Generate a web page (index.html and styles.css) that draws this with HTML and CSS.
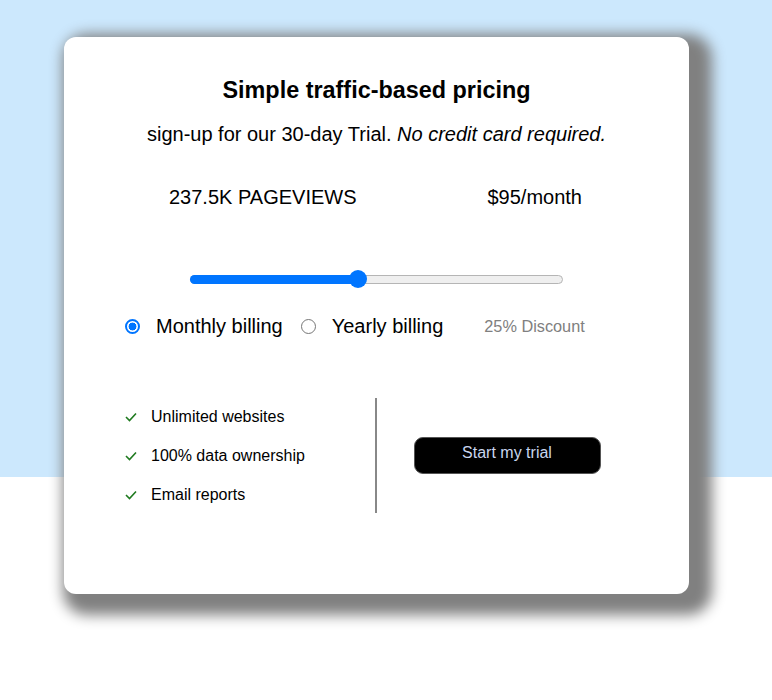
FILE: index.html
```html
<!DOCTYPE html>
<html>
<head>
<meta charset="utf-8">
<link rel="stylesheet" href="styles.css">
</head>
<body>
<div class="page">
  <div class="card">
    <h1 class="title">Simple traffic-based pricing</h1>
    <p class="subtitle">sign-up for our 30-day Trial. <em>No credit card required.</em></p>
    <div class="stats">
      <span class="views">237.5K PAGEVIEWS</span>
      <span class="price">$95/month</span>
    </div>
    <div class="slider">
      <div class="track">
        <div class="fill" style="width: 45%"></div>
        <div class="thumb" style="left: 45%"></div>
      </div>
    </div>
    <div class="billing">
      <span class="radio checked"></span>
      <span class="label">Monthly billing</span>
      <span class="radio"></span>
      <span class="label">Yearly billing</span>
      <span class="discount">25% Discount</span>
    </div>
    <div class="bottom">
      <ul class="features">
        <li><svg class="check" viewBox="0 0 12 10" width="12" height="10"><polyline points="1,5 4.5,8.5 11,1.5" fill="none" stroke="#1f7a1f" stroke-width="1.6"/></svg>Unlimited websites</li>
        <li><svg class="check" viewBox="0 0 12 10" width="12" height="10"><polyline points="1,5 4.5,8.5 11,1.5" fill="none" stroke="#1f7a1f" stroke-width="1.6"/></svg>100% data ownership</li>
        <li><svg class="check" viewBox="0 0 12 10" width="12" height="10"><polyline points="1,5 4.5,8.5 11,1.5" fill="none" stroke="#1f7a1f" stroke-width="1.6"/></svg>Email reports</li>
      </ul>
      <div class="divider"></div>
      <div class="cta">
        <button class="trial">Start my trial</button>
      </div>
    </div>
  </div>
</div>
</body>
</html>
```
FILE: styles.css
```css
html, body {
  margin: 0;
  padding: 0;
}
body {
  width: 772px;
  height: 700px;
  background: linear-gradient(#cce8fd 0, #cce8fd 477px, #ffffff 477px);
  font-family: "Liberation Sans", Arial, sans-serif;
  color: #000;
  overflow: hidden;
}
.page {
  padding: 37px 0 0 64px;
}
.card {
  width: 625px;
  height: 557px;
  box-sizing: border-box;
  background: #fff;
  border-radius: 12px;
  box-shadow: 11px 9px 14px 12px #808080;
  padding-top: 40px;
}
.title {
  margin: 0;
  font-size: 23.4px;
  line-height: 26px;
  font-weight: bold;
  text-align: center;
}
.subtitle {
  margin: 19px 0 0;
  font-size: 20px;
  line-height: 24px;
  text-align: center;
}
.stats {
  margin-top: 39px;
  display: flex;
  justify-content: space-between;
  padding: 0 107px 0 105px;
  font-size: 20px;
  line-height: 24px;
}
.slider {
  margin-top: 61px;
  height: 18px;
  display: flex;
  align-items: center;
  padding-left: 126px;
}
.track {
  position: relative;
  width: 373px;
  height: 9px;
  box-sizing: border-box;
  border: 1px solid #b5b5b5;
  border-radius: 5px;
  background: #efefef;
}
.fill {
  position: absolute;
  left: -1px;
  top: -1px;
  height: 9px;
  border-radius: 5px 0 0 5px;
  background: #0075ff;
}
.thumb {
  position: absolute;
  top: -5.5px;
  width: 18px;
  height: 18px;
  margin-left: -9px;
  border-radius: 50%;
  background: #0075ff;
}
.billing {
  margin-top: 26px;
  display: flex;
  align-items: center;
  padding-left: 61px;
  font-size: 20px;
  line-height: 24px;
}
.radio {
  width: 15px;
  height: 15px;
  box-sizing: border-box;
  border: 1px solid #767676;
  border-radius: 50%;
  background: #fff;
  margin-right: 16px;
}
.radio.checked {
  border: 2px solid #0075ff;
  background: radial-gradient(circle, #0075ff 0, #0075ff 3.7px, #fff 4.2px);
}
.label {
  margin-right: 18px;
}
.label + .radio + .label {
  margin-right: 41px;
}
.discount {
  font-size: 16.3px;
  color: #808080;
}
.bottom {
  margin-top: 60px;
  height: 115px;
  display: flex;
}
.features {
  list-style: none;
  margin: 0;
  padding: 9px 0 0 61px;
  width: 250px;
  display: flex;
  flex-direction: column;
  gap: 19px;
  font-size: 16px;
  line-height: 20px;
}
.features li {
  display: flex;
  align-items: center;
}
.check {
  margin-right: 14px;
}
.divider {
  width: 1.5px;
  height: 115px;
  background: #888;
}
.cta {
  display: flex;
  align-items: center;
  padding-left: 37px;
}
.trial {
  width: 187px;
  height: 37px;
  margin-top: -1px;
  background: #000;
  color: #c9d6ee;
  border: 1.5px solid #555;
  border-radius: 9px;
  font-family: "Liberation Sans", Arial, sans-serif;
  font-size: 16px;
  padding: 0 0 4px;
}
```
